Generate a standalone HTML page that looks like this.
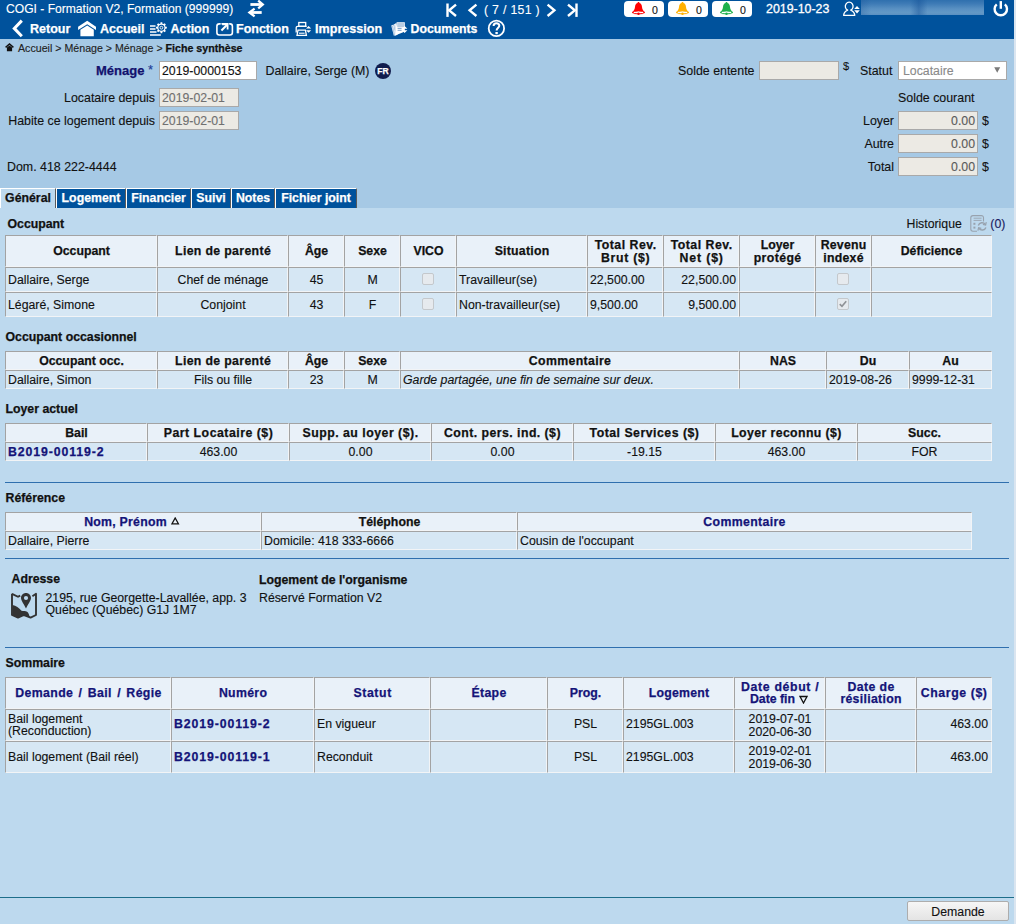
<!DOCTYPE html>
<html><head><meta charset="utf-8">
<style>
*{box-sizing:border-box}
html,body{margin:0;padding:0}
body{width:1016px;height:924px;overflow:hidden;position:relative;background:#DAE5F0;font-family:"Liberation Sans",sans-serif;font-size:12.3px;color:#111}
.a{position:absolute;white-space:nowrap;line-height:14px;-webkit-text-stroke:0.12px currentColor}
.w{color:#fff}
.b{font-weight:bold}
#hdr{position:absolute;left:0;top:0;width:1014px;height:39px;background:#00529C}
#form{position:absolute;left:0;top:39px;width:1014px;height:169px;background:#A6C9E5}
#cont{position:absolute;left:0;top:208px;width:1014px;height:716px;background:#BDD9EE}
.inp{position:absolute;border:1px solid #A9A9A9;background:#ECEAE4;color:#6D6D6D;line-height:16px;padding:0 3px;white-space:nowrap}
.tab{position:absolute;top:188px;height:20px;border-top:1px solid #fff;border-left:1px solid #fff;border-right:1px solid #5A5A5A;background:#00529C;color:#fff;font-weight:bold;text-align:center;line-height:18px;font-size:12.3px}
.sec{position:absolute;font-weight:bold;white-space:nowrap;line-height:14px;color:#111}
table.t{position:absolute;border-collapse:collapse;table-layout:fixed}
table.t td,table.t th{padding:0 3px;overflow:hidden;white-space:nowrap;border-left:1px solid #A3A3A3;border-top:1px solid #A3A3A3;box-shadow:inset 1px 1px 0 #EEF3F8;line-height:14px}
table.t th{background:#E9F1F9;font-weight:bold;text-align:center;color:#111}
table.t td{background:#D6E7F4}
.hr{position:absolute;left:5px;width:1003px;height:1px;background:#2A70B0}
.c{text-align:center}.r{text-align:right}
.cl{position:absolute;border-left:1px solid #A3A3A3;border-top:1px solid #A3A3A3;border-right:1px solid #F2F4F6;border-bottom:1px solid #F2F4F6}
.nv{color:#12126E}
[style*="font-weight:bold"],.b,b,.tab{-webkit-text-stroke:0.25px currentColor}
</style></head><body>
<div id="hdr"></div>
<div class="a w" style="left:6px;top:2px;font-size:12.1px">COGI - Formation V2, Formation (999999)</div>
<svg style="position:absolute;left:244px;top:0" width="24" height="20" viewBox="0 0 24 20" fill="none" stroke="#fff" stroke-width="2.6" stroke-linejoin="miter">
<path d="M14.2 0.6 L18.8 4.5 L14.2 8.4" stroke-width="2.3"/><path d="M6.4 4.5 H18" stroke-width="2.8"/>
<path d="M10.6 8.6 L5.4 12.5 L10.6 16.4" stroke-width="2.3"/><path d="M6.2 12.5 H17.7" stroke-width="2.8"/></svg>
<svg style="position:absolute;left:440px;top:0" width="140" height="20" viewBox="0 0 140 20" fill="none" stroke="#fff" stroke-width="2.4" stroke-linejoin="miter">
<path d="M7.5 3.5 V16.9"/><path d="M16 4.6 L9.2 10.3 L16 16"/>
<path d="M36.4 4.6 L29.6 10.3 L36.4 16"/>
<path d="M107.6 4.6 L114.4 10.3 L107.6 16"/>
<path d="M128 4.6 L134.8 10.3 L128 16"/><path d="M136.5 3.5 V16.9"/></svg>
<div class="a w" style="left:484px;top:2.5px;font-size:12.3px;letter-spacing:0.3px">( 7 / 151 )</div>
<div style="position:absolute;left:624px;top:1px;width:40px;height:16px;background:#fff;border-radius:4px"></div>
<svg style="position:absolute;left:631px;top:1px" width="15" height="15" viewBox="0 0 15 15"><path d="M7.5 1 C6.9 1 6.5 1.5 6.5 2 C4.8 2.5 4.2 4 4 6 C3.8 8.2 3 9.6 1.2 11 C0.8 11.5 1 12.2 1.8 12.2 H13.2 C14 12.2 14.2 11.5 13.8 11 C12 9.6 11.2 8.2 11 6 C10.8 4 10.2 2.5 8.5 2 C8.5 1.5 8.1 1 7.5 1 Z" fill="#FF0000"/><ellipse cx="7.5" cy="11.4" rx="5.6" ry="1.5" fill="#fff" stroke="#FF0000" stroke-width="1"/><circle cx="7.5" cy="12.8" r="1.2" fill="#FF0000"/></svg>
<div class="a" style="left:652px;top:2.5px;font-size:10.6px;color:#111">0</div>
<div style="position:absolute;left:668px;top:1px;width:40px;height:16px;background:#fff;border-radius:4px"></div>
<svg style="position:absolute;left:675px;top:1px" width="15" height="15" viewBox="0 0 15 15"><path d="M7.5 1 C6.9 1 6.5 1.5 6.5 2 C4.8 2.5 4.2 4 4 6 C3.8 8.2 3 9.6 1.2 11 C0.8 11.5 1 12.2 1.8 12.2 H13.2 C14 12.2 14.2 11.5 13.8 11 C12 9.6 11.2 8.2 11 6 C10.8 4 10.2 2.5 8.5 2 C8.5 1.5 8.1 1 7.5 1 Z" fill="#FFB000"/><ellipse cx="7.5" cy="11.4" rx="5.6" ry="1.5" fill="#fff" stroke="#FFB000" stroke-width="1"/><circle cx="7.5" cy="12.8" r="1.2" fill="#FFB000"/></svg>
<div class="a" style="left:696px;top:2.5px;font-size:10.6px;color:#111">0</div>
<div style="position:absolute;left:712px;top:1px;width:40px;height:16px;background:#fff;border-radius:4px"></div>
<svg style="position:absolute;left:719px;top:1px" width="15" height="15" viewBox="0 0 15 15"><path d="M7.5 1 C6.9 1 6.5 1.5 6.5 2 C4.8 2.5 4.2 4 4 6 C3.8 8.2 3 9.6 1.2 11 C0.8 11.5 1 12.2 1.8 12.2 H13.2 C14 12.2 14.2 11.5 13.8 11 C12 9.6 11.2 8.2 11 6 C10.8 4 10.2 2.5 8.5 2 C8.5 1.5 8.1 1 7.5 1 Z" fill="#1DB04A"/><ellipse cx="7.5" cy="11.4" rx="5.6" ry="1.5" fill="#fff" stroke="#1DB04A" stroke-width="1"/><circle cx="7.5" cy="12.8" r="1.2" fill="#1DB04A"/></svg>
<div class="a" style="left:740px;top:2.5px;font-size:10.6px;color:#111">0</div>
<div class="a w" style="left:766px;top:2.3px;font-size:12.4px;-webkit-text-stroke:0.3px #fff">2019-10-23</div>
<svg style="position:absolute;left:840px;top:0" width="22" height="18" viewBox="0 0 22 18" fill="none" stroke="#fff" stroke-width="1.3">
<path d="M7.7 10.1 A3.9 4.1 0 1 1 10.7 10.1 C12.7 10.9 14.4 12.4 14.8 15.3 H3.6 C4 12.4 5.7 10.9 7.7 10.1 Z" stroke-linejoin="round"/>
<path d="M14.2 9 L17 6.1 L19.8 9 Z M14.2 10.2 L17 13.6 L19.8 10.2 Z" fill="#fff" stroke="none"/></svg>
<div style="position:absolute;left:861px;top:0;width:123px;height:15px;background:linear-gradient(90deg,rgba(20,80,150,0.25) 0%,rgba(20,80,150,0) 8%,rgba(20,80,150,0) 40%,rgba(20,80,150,0.45) 47%,rgba(20,80,150,0) 54%,rgba(20,80,150,0) 100%),linear-gradient(180deg,#2F70AE 0%,#3E7BB6 25%,#5A91C3 60%,#6398C6 85%,#5A90C2 100%)"></div>
<svg style="position:absolute;left:988px;top:0" width="26" height="18" viewBox="0 0 26 18" fill="none" stroke="#fff" stroke-width="2.4">
<path d="M8.75 4.4 A6.2 6.2 0 1 0 16.85 4.4"/><path d="M12.8 1.1 V8.8"/></svg>

<svg style="position:absolute;left:8px;top:18px" width="20" height="20" viewBox="0 0 20 20" fill="none" stroke="#fff" stroke-width="2.8" stroke-linejoin="miter">
<path d="M13.8 2.6 L6.3 10.4 L13.8 18.2" stroke-width="3"/></svg>
<div class="a w b" style="left:30px;top:21.7px;font-size:12.5px">Retour</div>
<svg style="position:absolute;left:74px;top:18px" width="26" height="20" viewBox="0 0 26 20">
<path d="M4.1 8.8 L13.2 2.8 L22 8.8 V12 L13.2 6.2 L4.1 12 Z" fill="#fff"/>
<path d="M6.4 11.8 L13.2 7.4 L19.8 11.8 V18.2 H6.4 Z" fill="#fff"/></svg>
<div class="a w b" style="left:100px;top:21.7px;font-size:12.5px">Accueil</div>
<svg style="position:absolute;left:146px;top:18px" width="24" height="20" viewBox="0 0 24 20" fill="none" stroke="#fff">
<path d="M4 7.9 H9.5 M4 10.9 H9.5 M4 14 H10.5 M4 16.9 H14.8" stroke-width="1.5"/>
<path d="M20.83 8.84 L20.83 10.56 L19.47 10.74 L19.02 11.84 L19.85 12.93 L18.63 14.15 L17.54 13.32 L16.44 13.77 L16.26 15.13 L14.54 15.13 L14.36 13.77 L13.26 13.32 L12.17 14.15 L10.95 12.93 L11.78 11.84 L11.33 10.74 L9.97 10.56 L9.97 8.84 L11.33 8.66 L11.78 7.56 L10.95 6.47 L12.17 5.25 L13.26 6.08 L14.36 5.63 L14.54 4.27 L16.26 4.27 L16.44 5.63 L17.54 6.08 L18.63 5.25 L19.85 6.47 L19.02 7.56 L19.47 8.66 Z" fill="#fff" stroke="none"/><circle cx="15.4" cy="9.7" r="3" fill="#00529C" stroke="none"/><circle cx="15.4" cy="9.7" r="1.4" fill="none" stroke="#fff" stroke-width="0.9"/></svg>
<div class="a w b" style="left:170.5px;top:21.7px;font-size:12.5px">Action</div>
<svg style="position:absolute;left:212px;top:18px" width="24" height="20" viewBox="0 0 24 20" fill="none" stroke="#fff" stroke-width="1.6">
<rect x="4.9" y="5.9" width="15.5" height="11.1" rx="2.4"/>
<path d="M8.6 6.2 H9.6 M16.2 6.2 H17.2" stroke="#00529C" stroke-width="2"/>
<path d="M9.4 12.6 L15.4 6.6" stroke-width="2.1"/><path d="M10.2 6.3 H15.6 V11.6" stroke-width="1.8"/></svg>
<div class="a w b" style="left:236px;top:21.7px;font-size:12.5px">Fonction</div>
<svg style="position:absolute;left:291px;top:18px" width="24" height="20" viewBox="0 0 24 20" fill="none" stroke="#fff" stroke-width="1.3">
<rect x="7.8" y="4.5" width="6.9" height="3.8"/>
<path d="M5.2 14.4 V9.6 C5.2 8.7 5.8 8.3 6.6 8.3 H15.6"/>
<path d="M7 12.2 H14.4 L15.4 17.4 H6 Z"/>
<path d="M8 15.2 H13.6" stroke-width="1.1"/>
<path d="M15 10.6 L17.6 8 L20.2 10.6 Z M15 12.2 L17.6 14.8 L20.2 12.2 Z" fill="#fff" stroke="none"/></svg>
<div class="a w b" style="left:315px;top:21.7px;font-size:12.6px">Impression</div>
<svg style="position:absolute;left:387px;top:18px" width="24" height="20" viewBox="0 0 24 20">
<path d="M4.2 7.4 L6.6 6.6 L9 17.2 L6.8 17.8 Z" fill="#DDE8F4"/>
<path d="M6.8 6.4 L9.2 5 L10.6 16.8 L8.6 17.6 Z" fill="#EEF3FA"/>
<path d="M5.4 8 L7.4 17" stroke="#8FB0D4" stroke-width="0.6"/><path d="M7.6 7 L9.2 16.8" stroke="#A9C2DE" stroke-width="0.6"/>
<path d="M9.6 4.2 H17.8 V13 L15.6 14.6 L8 17.6 Z" fill="#fff"/>
<path d="M10.2 4.8 H17.2 V9.2 H10.2 Z" fill="#B9CDE2"/>
<path d="M10.6 10.4 H14.6 M10.6 12.3 H14.6" stroke="#3C74B0" stroke-width="0.7"/>
<path d="M14.8 10.8 L17.6 8 L20.4 10.8 Z M14.8 12.2 L17.6 15 L20.4 12.2 Z" fill="#fff"/></svg>
<div class="a w b" style="left:410.5px;top:21.7px;font-size:12.3px">Documents</div>
<svg style="position:absolute;left:484px;top:18px" width="24" height="20" viewBox="0 0 24 20" fill="none" stroke="#fff">
<circle cx="12.4" cy="10.4" r="7.7" stroke-width="1.8"/>
<path d="M9.6 8 C9.6 6.2 10.8 5.3 12.4 5.3 C14.2 5.3 15.3 6.3 15.3 7.8 C15.3 9.6 12.6 10 12.6 12.6" stroke-width="2"/>
<rect x="11.4" y="14" width="2.4" height="2.2" fill="#fff" stroke="none"/></svg>

<div id="form"></div>
<svg style="position:absolute;left:5px;top:43px" width="9" height="9" viewBox="0 0 9 9">
<path d="M0.6 4.4 L4.5 1 L8.4 4.4" fill="none" stroke="#111" stroke-width="1.4"/>
<path d="M1.9 4.6 L4.5 2.6 L7.1 4.6 V8.2 H1.9 Z" fill="#111"/></svg>
<div class="a" style="left:18px;top:40.8px;font-size:10.65px;color:#222">Accueil &gt; Ménage &gt; Ménage &gt; <b style="color:#111">Fiche synthèse</b></div>

<div class="a b nv" style="left:96px;top:64px;font-size:13px">Ménage</div><div class="a" style="left:148px;top:63px;font-size:13px;color:#1E3C96">*</div>
<div style="position:absolute;left:159px;top:61px;width:98px;height:19px;background:#fff;border:1px solid #A9A9A9"></div>
<div class="a" style="left:162px;top:64px;font-size:12.3px;color:#111">2019-0000153</div>
<div class="a" style="left:265.5px;top:63.5px;font-size:12.4px;color:#111">Dallaire, Serge (M)</div>
<div style="position:absolute;left:375px;top:63px;width:16px;height:16px;border-radius:50%;background:#111D4E;color:#fff;font-weight:bold;font-size:8.5px;line-height:16px;text-align:center">FR</div>

<div class="a" style="left:0;width:155px;text-align:right;top:90.5px;font-size:12.4px">Locataire depuis</div>
<div class="inp" style="left:159px;top:88px;width:80px;height:19px"></div>
<div class="a" style="left:162px;top:90.5px;font-size:12.3px;color:#707070">2019-02-01</div>
<div class="a" style="left:0;width:155px;text-align:right;top:113.5px;font-size:12.4px">Habite ce logement depuis</div>
<div class="inp" style="left:159px;top:111px;width:80px;height:19px"></div>
<div class="a" style="left:162px;top:113.5px;font-size:12.3px;color:#707070">2019-02-01</div>
<div class="a" style="left:7px;top:160px;font-size:12.4px">Dom. 418 222-4444</div>

<div class="a" style="left:678px;top:64px;font-size:12.4px">Solde entente</div>
<div class="inp" style="left:759px;top:61px;width:80px;height:19px"></div>
<div class="a" style="left:843px;top:59px;font-size:11px">$</div>
<div class="a" style="left:860px;top:64px;font-size:12.4px">Statut</div>
<div style="position:absolute;left:898px;top:61px;width:109px;height:19px;background:#fff;border:1px solid #A9A9A9"></div>
<div class="a" style="left:903px;top:64px;font-size:12.3px;color:#8A8A8A">Locataire</div>
<svg style="position:absolute;left:994px;top:67px" width="7" height="6" viewBox="0 0 7 6"><path d="M0.2 0.2 H6.2 L3.2 5.8 Z" fill="#7A7A7A"/></svg>
<div class="a" style="left:898px;top:90.5px;font-size:12.4px">Solde courant</div>
<div class="a" style="left:800px;width:94px;text-align:right;top:113.5px;font-size:12.4px">Loyer</div>
<div class="inp" style="left:898px;top:111px;width:80px;height:19px"></div>
<div class="a" style="left:898px;width:77px;text-align:right;top:113.5px;font-size:12.3px;color:#5A5A5A">0.00</div>
<div class="a" style="left:982px;top:113.5px;font-size:12.4px">$</div>
<div class="a" style="left:800px;width:94px;text-align:right;top:136.5px;font-size:12.4px">Autre</div>
<div class="inp" style="left:898px;top:134px;width:80px;height:19px"></div>
<div class="a" style="left:898px;width:77px;text-align:right;top:136.5px;font-size:12.3px;color:#5A5A5A">0.00</div>
<div class="a" style="left:982px;top:136.5px;font-size:12.4px">$</div>
<div class="a" style="left:800px;width:94px;text-align:right;top:159.5px;font-size:12.4px">Total</div>
<div class="inp" style="left:898px;top:157px;width:80px;height:19px"></div>
<div class="a" style="left:898px;width:77px;text-align:right;top:159.5px;font-size:12.3px;color:#5A5A5A">0.00</div>
<div class="a" style="left:982px;top:159.5px;font-size:12.4px">$</div>
<div class="tab" style="left:0px;width:56px;background:#BDD9EE;color:#111">Général</div>
<div class="tab" style="left:56px;width:70px;">Logement</div>
<div class="tab" style="left:126px;width:65px;">Financier</div>
<div class="tab" style="left:191px;width:40px;">Suivi</div>
<div class="tab" style="left:231px;width:44px;">Notes</div>
<div class="tab" style="left:275px;width:82px;">Fichier joint</div>

<div id="cont"></div>
<!--CONTENT-->
<div class="a" style="top:216.54px;font-size:12.3px;font-weight:bold;left:7.5px;">Occupant</div>
<div class="a" style="top:216.94px;font-size:12.3px;left:906.5px;">Historique</div>
<svg style="position:absolute;left:969px;top:215px" width="20" height="18" viewBox="0 0 20 18" fill="none" stroke="#98A2AE" stroke-width="1.1">
<path d="M14.5 6.6 V2.8 C14.5 1.4 13.6 0.6 12.3 0.6 H4 C2.6 0.6 1.8 1.4 1.8 2.8 V14 C1.8 15.4 2.6 16.2 4 16.2 H8"/>
<path d="M4.6 3.2 H12.6 M4.6 5.4 H12.6" stroke-width="0.9"/>
<rect x="4.4" y="7.8" width="2" height="2" fill="#98A2AE" stroke="none"/><rect x="4.4" y="11.6" width="2" height="2" fill="#98A2AE" stroke="none"/>
<path d="M9.3 10.4 A4 4 0 0 1 16.3 9.4" stroke-width="1.4"/><path d="M17.3 7.2 L16.6 10 L13.9 9.4" stroke-width="1.2"/>
<path d="M16.9 12.4 A4 4 0 0 1 9.9 13.4" stroke-width="1.4"/><path d="M8.9 15.6 L9.6 12.8 L12.3 13.4" stroke-width="1.2"/></svg>
<div class="a" style="top:216.94px;font-size:12.3px;color:#1A1A60;left:990.3px;">(0)</div>
<div class="cl" style="left:5px;top:235px;width:152px;height:32px;background:#E9F1F9"></div>
<div class="cl" style="left:157px;top:235px;width:131px;height:32px;background:#E9F1F9"></div>
<div class="cl" style="left:288px;top:235px;width:56px;height:32px;background:#E9F1F9"></div>
<div class="cl" style="left:344px;top:235px;width:56px;height:32px;background:#E9F1F9"></div>
<div class="cl" style="left:400px;top:235px;width:56px;height:32px;background:#E9F1F9"></div>
<div class="cl" style="left:456px;top:235px;width:131px;height:32px;background:#E9F1F9"></div>
<div class="cl" style="left:587px;top:235px;width:76px;height:32px;background:#E9F1F9"></div>
<div class="cl" style="left:663px;top:235px;width:76px;height:32px;background:#E9F1F9"></div>
<div class="cl" style="left:739px;top:235px;width:76px;height:32px;background:#E9F1F9"></div>
<div class="cl" style="left:815px;top:235px;width:56px;height:32px;background:#E9F1F9"></div>
<div class="cl" style="left:871px;top:235px;width:121px;height:32px;background:#E9F1F9"></div>
<div class="cl" style="left:5px;top:267px;width:152px;height:25px;background:#D6E7F4"></div>
<div class="cl" style="left:157px;top:267px;width:131px;height:25px;background:#D6E7F4"></div>
<div class="cl" style="left:288px;top:267px;width:56px;height:25px;background:#D6E7F4"></div>
<div class="cl" style="left:344px;top:267px;width:56px;height:25px;background:#D6E7F4"></div>
<div class="cl" style="left:400px;top:267px;width:56px;height:25px;background:#D6E7F4"></div>
<div class="cl" style="left:456px;top:267px;width:131px;height:25px;background:#D6E7F4"></div>
<div class="cl" style="left:587px;top:267px;width:76px;height:25px;background:#D6E7F4"></div>
<div class="cl" style="left:663px;top:267px;width:76px;height:25px;background:#D6E7F4"></div>
<div class="cl" style="left:739px;top:267px;width:76px;height:25px;background:#D6E7F4"></div>
<div class="cl" style="left:815px;top:267px;width:56px;height:25px;background:#D6E7F4"></div>
<div class="cl" style="left:871px;top:267px;width:121px;height:25px;background:#D6E7F4"></div>
<div class="cl" style="left:5px;top:292px;width:152px;height:25px;background:#D6E7F4"></div>
<div class="cl" style="left:157px;top:292px;width:131px;height:25px;background:#D6E7F4"></div>
<div class="cl" style="left:288px;top:292px;width:56px;height:25px;background:#D6E7F4"></div>
<div class="cl" style="left:344px;top:292px;width:56px;height:25px;background:#D6E7F4"></div>
<div class="cl" style="left:400px;top:292px;width:56px;height:25px;background:#D6E7F4"></div>
<div class="cl" style="left:456px;top:292px;width:131px;height:25px;background:#D6E7F4"></div>
<div class="cl" style="left:587px;top:292px;width:76px;height:25px;background:#D6E7F4"></div>
<div class="cl" style="left:663px;top:292px;width:76px;height:25px;background:#D6E7F4"></div>
<div class="cl" style="left:739px;top:292px;width:76px;height:25px;background:#D6E7F4"></div>
<div class="cl" style="left:815px;top:292px;width:56px;height:25px;background:#D6E7F4"></div>
<div class="cl" style="left:871px;top:292px;width:121px;height:25px;background:#D6E7F4"></div>
<div class="a" style="top:243.84px;font-size:12.3px;font-weight:bold;left:6px;width:151px;text-align:center;">Occupant</div>
<div class="a" style="top:243.84px;font-size:12.3px;font-weight:bold;left:158px;width:130px;text-align:center;letter-spacing:0.34px;text-indent:0.17px;">Lien de parenté</div>
<div class="a" style="top:243.84px;font-size:12.3px;font-weight:bold;left:289px;width:55px;text-align:center;">Âge</div>
<div class="a" style="top:243.84px;font-size:12.3px;font-weight:bold;left:345px;width:55px;text-align:center;">Sexe</div>
<div class="a" style="top:243.84px;font-size:12.3px;font-weight:bold;left:401px;width:55px;text-align:center;">VICO</div>
<div class="a" style="top:243.84px;font-size:12.3px;font-weight:bold;left:457px;width:130px;text-align:center;letter-spacing:0.24px;text-indent:0.12px;">Situation</div>
<div class="a" style="top:237.84px;font-size:12.3px;font-weight:bold;left:588px;width:75px;text-align:center;letter-spacing:0.5px;text-indent:0.25px;">Total Rev.</div>
<div class="a" style="top:250.54px;font-size:12.3px;font-weight:bold;left:588px;width:75px;text-align:center;letter-spacing:0.7px;text-indent:0.35px;">Brut ($)</div>
<div class="a" style="top:237.84px;font-size:12.3px;font-weight:bold;left:664px;width:75px;text-align:center;letter-spacing:0.5px;text-indent:0.25px;">Total Rev.</div>
<div class="a" style="top:250.54px;font-size:12.3px;font-weight:bold;left:664px;width:75px;text-align:center;letter-spacing:0.85px;text-indent:0.425px;">Net ($)</div>
<div class="a" style="top:237.84px;font-size:12.3px;font-weight:bold;left:740px;width:75px;text-align:center;">Loyer</div>
<div class="a" style="top:250.54px;font-size:12.3px;font-weight:bold;left:740px;width:75px;text-align:center;letter-spacing:0.4px;text-indent:0.2px;">protégé</div>
<div class="a" style="top:237.84px;font-size:12.3px;font-weight:bold;left:816px;width:55px;text-align:center;letter-spacing:0.2px;text-indent:0.1px;">Revenu</div>
<div class="a" style="top:250.54px;font-size:12.3px;font-weight:bold;left:816px;width:55px;text-align:center;letter-spacing:0.25px;text-indent:0.125px;">indexé</div>
<div class="a" style="top:243.84px;font-size:12.3px;font-weight:bold;left:872px;width:119px;text-align:center;">Déficience</div>
<div class="a" style="top:272.94px;font-size:12.3px;left:8px;">Dallaire, Serge</div>
<div class="a" style="top:272.94px;font-size:12.3px;left:158px;width:130px;text-align:center;">Chef de ménage</div>
<div class="a" style="top:272.94px;font-size:12.3px;left:289px;width:55px;text-align:center;">45</div>
<div class="a" style="top:272.94px;font-size:12.3px;left:345px;width:55px;text-align:center;">M</div>
<div style="position:absolute;left:422px;top:273px;width:12px;height:12px;border:1px solid #C4C8CC;border-radius:2px;background:#E6EAEE"></div>
<div class="a" style="top:272.94px;font-size:12.3px;left:459px;">Travailleur(se)</div>
<div class="a" style="top:272.94px;font-size:12.3px;left:590px;">22,500.00</div>
<div class="a" style="top:272.94px;font-size:12.3px;left:664px;width:72px;text-align:right;">22,500.00</div>
<div style="position:absolute;left:837px;top:273px;width:12px;height:12px;border:1px solid #C4C8CC;border-radius:2px;background:#E6EAEE"></div>
<div class="a" style="top:298.04px;font-size:12.3px;left:8px;">Légaré, Simone</div>
<div class="a" style="top:298.04px;font-size:12.3px;left:158px;width:130px;text-align:center;">Conjoint</div>
<div class="a" style="top:298.04px;font-size:12.3px;left:289px;width:55px;text-align:center;">43</div>
<div class="a" style="top:298.04px;font-size:12.3px;left:345px;width:55px;text-align:center;">F</div>
<div style="position:absolute;left:422px;top:298px;width:12px;height:12px;border:1px solid #C4C8CC;border-radius:2px;background:#E6EAEE"></div>
<div class="a" style="top:298.04px;font-size:12.3px;left:459px;">Non-travailleur(se)</div>
<div class="a" style="top:298.04px;font-size:12.3px;left:590px;">9,500.00</div>
<div class="a" style="top:298.04px;font-size:12.3px;left:664px;width:72px;text-align:right;">9,500.00</div>
<div style="position:absolute;left:837px;top:298px;width:12px;height:12px;border:1px solid #C4C8CC;border-radius:2px;background:#E6EAEE"></div>
<svg style="position:absolute;left:837px;top:298px" width="12" height="12" viewBox="0 0 13 13"><path d="M3 6.6 L5.4 9 L10 3.6" fill="none" stroke="#8F9296" stroke-width="1.8"/></svg>
<div class="a" style="top:329.74px;font-size:12.3px;font-weight:bold;left:5.5px;">Occupant occasionnel</div>
<div class="cl" style="left:5px;top:351px;width:152px;height:19px;background:#E9F1F9"></div>
<div class="cl" style="left:157px;top:351px;width:131px;height:19px;background:#E9F1F9"></div>
<div class="cl" style="left:288px;top:351px;width:56px;height:19px;background:#E9F1F9"></div>
<div class="cl" style="left:344px;top:351px;width:56px;height:19px;background:#E9F1F9"></div>
<div class="cl" style="left:400px;top:351px;width:339px;height:19px;background:#E9F1F9"></div>
<div class="cl" style="left:739px;top:351px;width:87px;height:19px;background:#E9F1F9"></div>
<div class="cl" style="left:826px;top:351px;width:83px;height:19px;background:#E9F1F9"></div>
<div class="cl" style="left:909px;top:351px;width:83px;height:19px;background:#E9F1F9"></div>
<div class="cl" style="left:5px;top:370px;width:152px;height:19px;background:#D6E7F4"></div>
<div class="cl" style="left:157px;top:370px;width:131px;height:19px;background:#D6E7F4"></div>
<div class="cl" style="left:288px;top:370px;width:56px;height:19px;background:#D6E7F4"></div>
<div class="cl" style="left:344px;top:370px;width:56px;height:19px;background:#D6E7F4"></div>
<div class="cl" style="left:400px;top:370px;width:339px;height:19px;background:#D6E7F4"></div>
<div class="cl" style="left:739px;top:370px;width:87px;height:19px;background:#D6E7F4"></div>
<div class="cl" style="left:826px;top:370px;width:83px;height:19px;background:#D6E7F4"></div>
<div class="cl" style="left:909px;top:370px;width:83px;height:19px;background:#D6E7F4"></div>
<div class="a" style="top:353.94px;font-size:12.3px;font-weight:bold;left:6px;width:151px;text-align:center;">Occupant occ.</div>
<div class="a" style="top:353.94px;font-size:12.3px;font-weight:bold;left:158px;width:130px;text-align:center;letter-spacing:0.34px;text-indent:0.17px;">Lien de parenté</div>
<div class="a" style="top:353.94px;font-size:12.3px;font-weight:bold;left:289px;width:55px;text-align:center;">Âge</div>
<div class="a" style="top:353.94px;font-size:12.3px;font-weight:bold;left:345px;width:55px;text-align:center;">Sexe</div>
<div class="a" style="top:353.94px;font-size:12.3px;font-weight:bold;left:401px;width:338px;text-align:center;letter-spacing:0.35px;text-indent:0.175px;">Commentaire</div>
<div class="a" style="top:353.94px;font-size:12.3px;font-weight:bold;left:740px;width:86px;text-align:center;">NAS</div>
<div class="a" style="top:353.94px;font-size:12.3px;font-weight:bold;left:827px;width:82px;text-align:center;">Du</div>
<div class="a" style="top:353.94px;font-size:12.3px;font-weight:bold;left:910px;width:81px;text-align:center;">Au</div>
<div class="a" style="top:372.94px;font-size:12.3px;left:8px;">Dallaire, Simon</div>
<div class="a" style="top:372.94px;font-size:12.3px;left:158px;width:130px;text-align:center;">Fils ou fille</div>
<div class="a" style="top:372.94px;font-size:12.3px;left:289px;width:55px;text-align:center;">23</div>
<div class="a" style="top:372.94px;font-size:12.3px;left:345px;width:55px;text-align:center;">M</div>
<div class="a" style="top:372.94px;font-size:12.3px;font-style:italic;left:403px;">Garde partagée, une fin de semaine sur deux.</div>
<div class="a" style="top:372.94px;font-size:12.3px;left:829px;">2019-08-26</div>
<div class="a" style="top:372.94px;font-size:12.3px;left:912px;">9999-12-31</div>
<div class="a" style="top:402.14px;font-size:12.3px;font-weight:bold;left:5.5px;">Loyer actuel</div>
<div class="cl" style="left:5px;top:423px;width:142px;height:19px;background:#E9F1F9"></div>
<div class="cl" style="left:147px;top:423px;width:142px;height:19px;background:#E9F1F9"></div>
<div class="cl" style="left:289px;top:423px;width:142px;height:19px;background:#E9F1F9"></div>
<div class="cl" style="left:431px;top:423px;width:142px;height:19px;background:#E9F1F9"></div>
<div class="cl" style="left:573px;top:423px;width:142px;height:19px;background:#E9F1F9"></div>
<div class="cl" style="left:715px;top:423px;width:142px;height:19px;background:#E9F1F9"></div>
<div class="cl" style="left:857px;top:423px;width:135px;height:19px;background:#E9F1F9"></div>
<div class="cl" style="left:5px;top:442px;width:142px;height:19px;background:#D6E7F4"></div>
<div class="cl" style="left:147px;top:442px;width:142px;height:19px;background:#D6E7F4"></div>
<div class="cl" style="left:289px;top:442px;width:142px;height:19px;background:#D6E7F4"></div>
<div class="cl" style="left:431px;top:442px;width:142px;height:19px;background:#D6E7F4"></div>
<div class="cl" style="left:573px;top:442px;width:142px;height:19px;background:#D6E7F4"></div>
<div class="cl" style="left:715px;top:442px;width:142px;height:19px;background:#D6E7F4"></div>
<div class="cl" style="left:857px;top:442px;width:135px;height:19px;background:#D6E7F4"></div>
<div class="a" style="top:425.54px;font-size:12.3px;font-weight:bold;left:6px;width:141px;text-align:center;">Bail</div>
<div class="a" style="top:425.54px;font-size:12.3px;font-weight:bold;left:148px;width:141px;text-align:center;letter-spacing:0.5px;">Part Locataire ($)</div>
<div class="a" style="top:425.54px;font-size:12.3px;font-weight:bold;left:290px;width:141px;text-align:center;letter-spacing:0.5px;">Supp. au loyer ($).</div>
<div class="a" style="top:425.54px;font-size:12.3px;font-weight:bold;left:432px;width:141px;text-align:center;letter-spacing:0.45px;">Cont. pers. ind. ($)</div>
<div class="a" style="top:425.54px;font-size:12.3px;font-weight:bold;left:574px;width:141px;text-align:center;letter-spacing:0.5px;">Total Services ($)</div>
<div class="a" style="top:425.54px;font-size:12.3px;font-weight:bold;left:716px;width:141px;text-align:center;letter-spacing:0.4px;">Loyer reconnu ($)</div>
<div class="a" style="top:425.54px;font-size:12.3px;font-weight:bold;left:858px;width:133px;text-align:center;">Succ.</div>
<div class="a" style="top:444.94px;font-size:12.3px;font-weight:bold;color:#141478;left:8px;letter-spacing:0.9px;">B2019-00119-2</div>
<div class="a" style="top:444.94px;font-size:12.3px;left:148px;width:141px;text-align:center;">463.00</div>
<div class="a" style="top:444.94px;font-size:12.3px;left:290px;width:141px;text-align:center;">0.00</div>
<div class="a" style="top:444.94px;font-size:12.3px;left:432px;width:141px;text-align:center;">0.00</div>
<div class="a" style="top:444.94px;font-size:12.3px;left:574px;width:141px;text-align:center;">-19.15</div>
<div class="a" style="top:444.94px;font-size:12.3px;left:716px;width:141px;text-align:center;">463.00</div>
<div class="a" style="top:444.94px;font-size:12.3px;left:858px;width:133px;text-align:center;">FOR</div>
<div style="position:absolute;left:5px;top:482px;width:1004px;height:1px;background:#2F6FAE"></div>
<div style="position:absolute;left:5px;top:558px;width:1004px;height:1px;background:#2F6FAE"></div>
<div style="position:absolute;left:5px;top:647px;width:1004px;height:1px;background:#2F6FAE"></div>
<div class="a" style="top:490.74px;font-size:12.3px;font-weight:bold;left:5.5px;">Référence</div>
<div class="cl" style="left:5px;top:512px;width:256px;height:19px;background:#E9F1F9"></div>
<div class="cl" style="left:261px;top:512px;width:256px;height:19px;background:#E9F1F9"></div>
<div class="cl" style="left:517px;top:512px;width:455px;height:19px;background:#E9F1F9"></div>
<div class="cl" style="left:5px;top:531px;width:256px;height:19px;background:#D6E7F4"></div>
<div class="cl" style="left:261px;top:531px;width:256px;height:19px;background:#D6E7F4"></div>
<div class="cl" style="left:517px;top:531px;width:455px;height:19px;background:#D6E7F4"></div>
<div class="a" style="top:514.74px;font-size:12.3px;font-weight:bold;color:#141478;left:6px;width:239px;text-align:center;letter-spacing:0.25px;text-indent:0.125px;">Nom, Prénom</div>
<svg style="position:absolute;left:171px;top:517px" width="9" height="8" viewBox="0 0 9 8"><path d="M4.2 1 L7.4 6.8 H1 Z" fill="none" stroke="#111" stroke-width="1.3"/></svg>
<div class="a" style="top:514.74px;font-size:12.3px;font-weight:bold;left:262px;width:255px;text-align:center;">Téléphone</div>
<div class="a" style="top:514.74px;font-size:12.3px;font-weight:bold;color:#141478;left:518px;width:453px;text-align:center;letter-spacing:0.35px;text-indent:0.175px;">Commentaire</div>
<div class="a" style="top:533.74px;font-size:12.3px;left:8px;">Dallaire, Pierre</div>
<div class="a" style="top:533.74px;font-size:12.3px;left:264px;">Domicile: 418 333-6666</div>
<div class="a" style="top:533.74px;font-size:12.3px;left:520px;">Cousin de l'occupant</div>
<div class="a" style="top:571.74px;font-size:12.3px;font-weight:bold;left:11.5px;">Adresse</div>
<svg style="position:absolute;left:6px;top:588px" width="36" height="36" viewBox="0 0 36 36">
<path d="M6 5.8 L12 8.8 L14.2 7.6" fill="none" stroke="#333" stroke-width="1.9"/>
<path d="M26.4 8.2 L30 5.8 V27 L24.6 29.6 L18 27 L12 29.6 L6 27 V5.8" fill="none" stroke="#333" stroke-width="1.9" stroke-linejoin="round"/>
<path d="M6.5 17 C10 17.5 13 20 15.5 22.8 C17 23.2 19.5 22.6 21.5 24 C22.6 25 23.2 27.5 24 29.4 L18 27 L12 29.6 L6.5 27.2 Z" fill="#333"/>
<path d="M20 5 C17.2 5 15 7.2 15 10 C15 12.5 18.5 17 20 20.5 C21.5 17 25 12.5 25 10 C25 7.2 22.8 5 20 5 Z" fill="#333"/>
<circle cx="20" cy="10" r="2.1" fill="#BDD9EE"/></svg>
<div class="a" style="top:590.54px;font-size:12.3px;left:45.5px;">2195, rue Georgette-Lavallée, app. 3</div>
<div class="a" style="top:603.04px;font-size:12.3px;left:45.5px;">Québec (Québec) G1J 1M7</div>
<div class="a" style="top:572.74px;font-size:12.3px;font-weight:bold;left:259px;">Logement de l'organisme</div>
<div class="a" style="top:590.54px;font-size:12.3px;left:259px;">Réservé Formation V2</div>
<div class="a" style="top:655.94px;font-size:12.3px;font-weight:bold;left:5.5px;">Sommaire</div>
<div class="cl" style="left:5px;top:677px;width:166px;height:32px;background:#E9F1F9"></div>
<div class="cl" style="left:171px;top:677px;width:143px;height:32px;background:#E9F1F9"></div>
<div class="cl" style="left:314px;top:677px;width:116px;height:32px;background:#E9F1F9"></div>
<div class="cl" style="left:430px;top:677px;width:117px;height:32px;background:#E9F1F9"></div>
<div class="cl" style="left:547px;top:677px;width:76px;height:32px;background:#E9F1F9"></div>
<div class="cl" style="left:623px;top:677px;width:111px;height:32px;background:#E9F1F9"></div>
<div class="cl" style="left:734px;top:677px;width:91px;height:32px;background:#E9F1F9"></div>
<div class="cl" style="left:825px;top:677px;width:91px;height:32px;background:#E9F1F9"></div>
<div class="cl" style="left:916px;top:677px;width:76px;height:32px;background:#E9F1F9"></div>
<div class="cl" style="left:5px;top:709px;width:166px;height:32px;background:#D6E7F4"></div>
<div class="cl" style="left:171px;top:709px;width:143px;height:32px;background:#D6E7F4"></div>
<div class="cl" style="left:314px;top:709px;width:116px;height:32px;background:#D6E7F4"></div>
<div class="cl" style="left:430px;top:709px;width:117px;height:32px;background:#D6E7F4"></div>
<div class="cl" style="left:547px;top:709px;width:76px;height:32px;background:#D6E7F4"></div>
<div class="cl" style="left:623px;top:709px;width:111px;height:32px;background:#D6E7F4"></div>
<div class="cl" style="left:734px;top:709px;width:91px;height:32px;background:#D6E7F4"></div>
<div class="cl" style="left:825px;top:709px;width:91px;height:32px;background:#D6E7F4"></div>
<div class="cl" style="left:916px;top:709px;width:76px;height:32px;background:#D6E7F4"></div>
<div class="cl" style="left:5px;top:741px;width:166px;height:32px;background:#D6E7F4"></div>
<div class="cl" style="left:171px;top:741px;width:143px;height:32px;background:#D6E7F4"></div>
<div class="cl" style="left:314px;top:741px;width:116px;height:32px;background:#D6E7F4"></div>
<div class="cl" style="left:430px;top:741px;width:117px;height:32px;background:#D6E7F4"></div>
<div class="cl" style="left:547px;top:741px;width:76px;height:32px;background:#D6E7F4"></div>
<div class="cl" style="left:623px;top:741px;width:111px;height:32px;background:#D6E7F4"></div>
<div class="cl" style="left:734px;top:741px;width:91px;height:32px;background:#D6E7F4"></div>
<div class="cl" style="left:825px;top:741px;width:91px;height:32px;background:#D6E7F4"></div>
<div class="cl" style="left:916px;top:741px;width:76px;height:32px;background:#D6E7F4"></div>
<div class="a" style="top:685.54px;font-size:12.3px;font-weight:bold;color:#141478;left:6px;width:165px;text-align:center;word-spacing:1.5px;letter-spacing:0.4px;">Demande / Bail / Régie</div>
<div class="a" style="top:685.54px;font-size:12.3px;font-weight:bold;color:#141478;left:172px;width:142px;text-align:center;letter-spacing:0.3px;text-indent:0.15px;">Numéro</div>
<div class="a" style="top:685.54px;font-size:12.3px;font-weight:bold;color:#141478;left:315px;width:115px;text-align:center;letter-spacing:0.6px;text-indent:0.3px;">Statut</div>
<div class="a" style="top:685.54px;font-size:12.3px;font-weight:bold;color:#141478;left:431px;width:116px;text-align:center;letter-spacing:0.3px;text-indent:0.15px;">Étape</div>
<div class="a" style="top:685.54px;font-size:12.3px;font-weight:bold;color:#141478;left:548px;width:75px;text-align:center;">Prog.</div>
<div class="a" style="top:685.54px;font-size:12.3px;font-weight:bold;color:#141478;left:624px;width:110px;text-align:center;letter-spacing:0.2px;text-indent:0.1px;">Logement</div>
<div class="a" style="top:685.54px;font-size:12.3px;font-weight:bold;color:#141478;left:917px;width:74px;text-align:center;letter-spacing:0.6px;text-indent:0.3px;">Charge ($)</div>
<div class="a" style="top:679.54px;font-size:12.3px;font-weight:bold;color:#141478;left:735px;width:90px;text-align:center;letter-spacing:0.65px;text-indent:0.325px;">Date début /</div>
<div class="a" style="top:691.94px;font-size:12.3px;font-weight:bold;color:#141478;left:735px;width:75px;text-align:center;">Date fin</div>
<svg style="position:absolute;left:799px;top:695px" width="9" height="9" viewBox="0 0 9 9"><path d="M1 1.5 H8 L4.5 8 Z" fill="none" stroke="#111" stroke-width="1.3"/></svg>
<div class="a" style="top:679.54px;font-size:12.3px;font-weight:bold;color:#141478;left:826px;width:90px;text-align:center;letter-spacing:0.4px;text-indent:0.2px;">Date de</div>
<div class="a" style="top:691.94px;font-size:12.3px;font-weight:bold;color:#141478;left:826px;width:90px;text-align:center;letter-spacing:0.3px;text-indent:0.15px;">résiliation</div>
<div class="a" style="top:711.64px;font-size:12.3px;left:8px;">Bail logement</div>
<div class="a" style="top:724.04px;font-size:12.3px;left:8px;">(Reconduction)</div>
<div class="a" style="top:717.34px;font-size:12.3px;font-weight:bold;color:#141478;left:174px;letter-spacing:0.9px;">B2019-00119-2</div>
<div class="a" style="top:717.34px;font-size:12.3px;left:317px;">En vigueur</div>
<div class="a" style="top:717.34px;font-size:12.3px;left:548px;width:75px;text-align:center;">PSL</div>
<div class="a" style="top:717.34px;font-size:12.3px;left:626px;">2195GL.003</div>
<div class="a" style="top:711.94px;font-size:12.3px;left:735px;width:90px;text-align:center;">2019-07-01</div>
<div class="a" style="top:724.74px;font-size:12.3px;left:735px;width:90px;text-align:center;">2020-06-30</div>
<div class="a" style="top:717.34px;font-size:12.3px;left:917px;width:71px;text-align:right;">463.00</div>
<div class="a" style="top:749.74px;font-size:12.3px;left:8px;">Bail logement (Bail réel)</div>
<div class="a" style="top:749.74px;font-size:12.3px;font-weight:bold;color:#141478;left:174px;letter-spacing:0.9px;">B2019-00119-1</div>
<div class="a" style="top:749.74px;font-size:12.3px;left:317px;">Reconduit</div>
<div class="a" style="top:749.74px;font-size:12.3px;left:548px;width:75px;text-align:center;">PSL</div>
<div class="a" style="top:749.74px;font-size:12.3px;left:626px;">2195GL.003</div>
<div class="a" style="top:743.84px;font-size:12.3px;left:735px;width:90px;text-align:center;">2019-02-01</div>
<div class="a" style="top:756.64px;font-size:12.3px;left:735px;width:90px;text-align:center;">2019-06-30</div>
<div class="a" style="top:749.74px;font-size:12.3px;left:917px;width:71px;text-align:right;">463.00</div>
<div style="position:absolute;left:0;top:897px;width:1014px;height:1px;background:#1D6E8A"></div>
<div style="position:absolute;left:907px;top:901px;width:102px;height:20px;border:1px solid #ADADAD;border-radius:2px;background:linear-gradient(#F6F6F6,#E4E4E4)"></div>
<div class="a" style="top:904.74px;font-size:12.3px;left:908px;width:100px;text-align:center;">Demande</div>
<!--/CONTENT-->
</body></html>
